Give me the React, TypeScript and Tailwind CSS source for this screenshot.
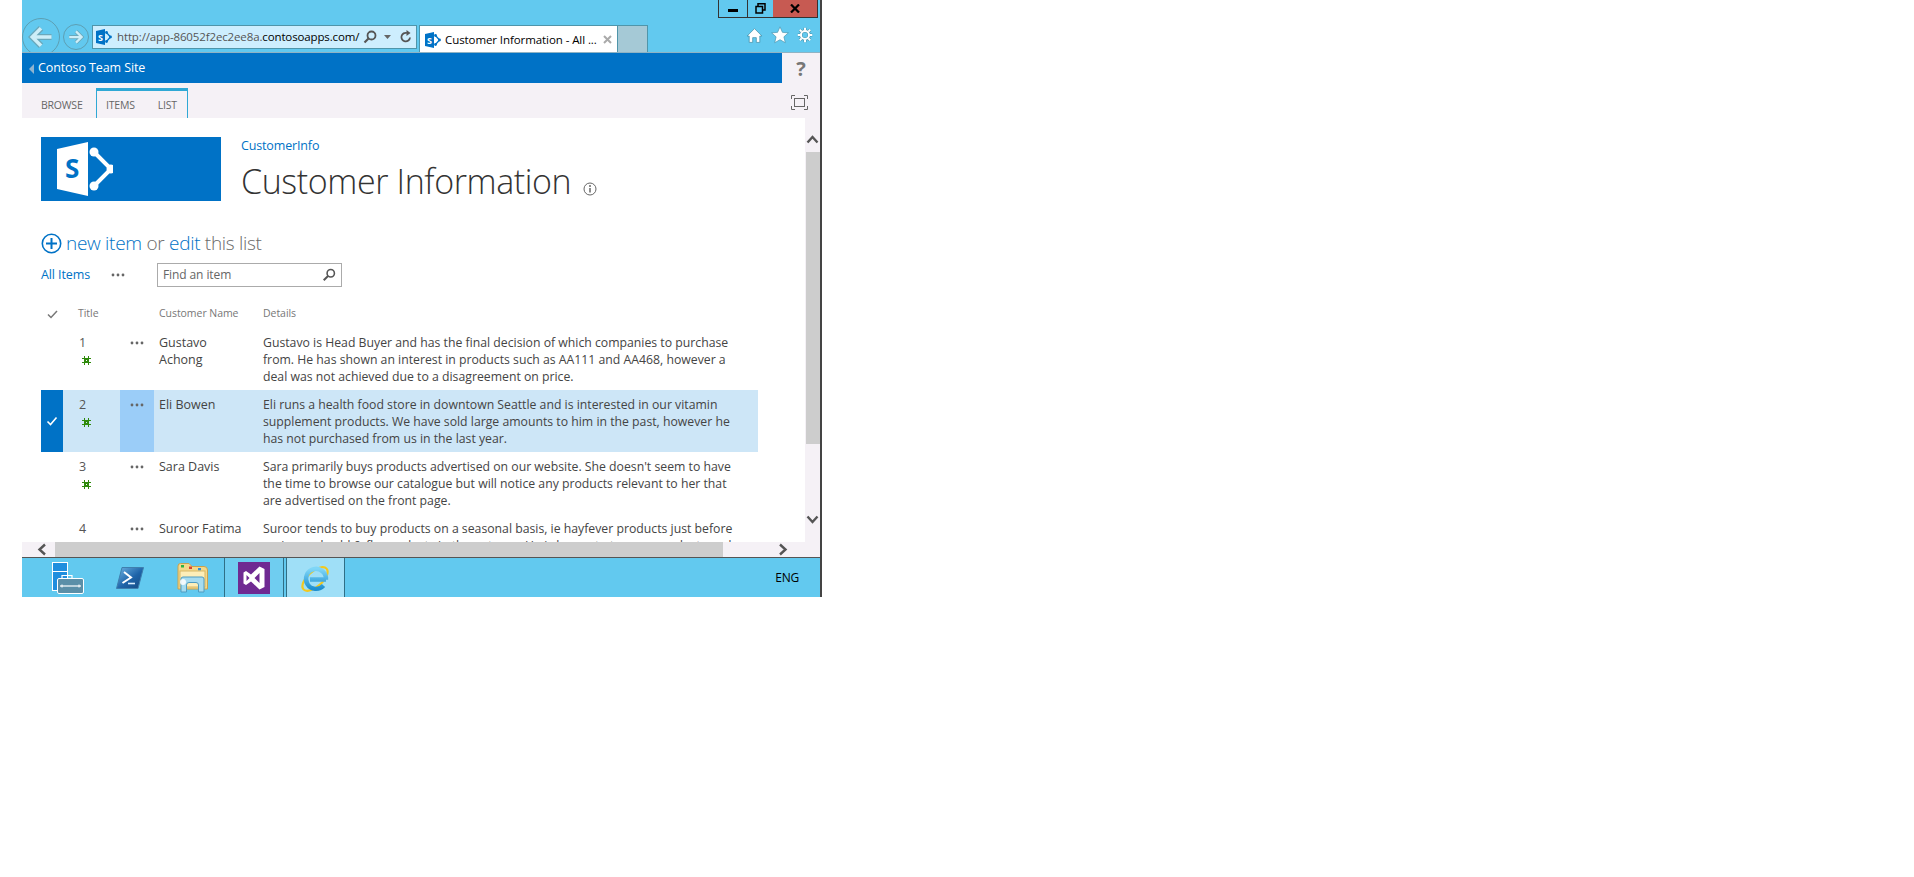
import React from "react";

function SpLogo({ size = 16 }: { size?: number }) {
  return (
    <svg width={size} height={size} viewBox="0 0 16 16" className="shrink-0">
      <path d="M0 2 L9 0 V16 L0 14 Z" fill="#0072c6" />
      <text x="2" y="11.5" fontSize="9" fontWeight="700" fill="#fff" fontFamily="'Open Sans', sans-serif">S</text>
      <path d="M10.5 3.5 L14.5 8 L10.5 12.5" fill="none" stroke="#0072c6" strokeWidth="1.3" />
      <circle cx="10.5" cy="3.5" r="1.4" fill="#0072c6" />
      <circle cx="14.5" cy="8" r="1.4" fill="#0072c6" />
      <circle cx="10.5" cy="12.5" r="1.4" fill="#0072c6" />
    </svg>
  );
}

function Dots({ color = "#666" }: { color?: string }) {
  return (
    <svg width="14" height="4" viewBox="0 0 14 4">
      <circle cx="2" cy="2" r="1.4" fill={color} />
      <circle cx="7" cy="2" r="1.4" fill={color} />
      <circle cx="12" cy="2" r="1.4" fill={color} />
    </svg>
  );
}

function NewIcon() {
  return (
    <svg width="9" height="9" viewBox="0 0 9 9" className="mt-[5px] ml-[3px]" shapeRendering="crispEdges">
      <g stroke="#2f8a0c" strokeWidth="1" fill="none">
        <path d="M2.5 0 V9 M6.5 0 V9 M0 2.5 H9 M0 6.5 H9" />
        <path d="M3.5 3.5 H5.5 V5.5 H3.5 Z" />
      </g>
    </svg>
  );
}

function Row({ n, name, lines, selected }: { n: number; name: string[]; lines: string[]; selected?: boolean }) {
  return (
    <div className={selected ? "flex h-[62px] shrink-0 w-[717px] bg-[#cde6f7]" : "flex h-[62px] shrink-0 w-[717px]"}>
      <div className={selected ? "w-[22px] bg-[#0072c6] flex items-center justify-center" : "w-[22px]"}>
        {selected && (
          <svg width="12" height="10" viewBox="0 0 12 10">
            <path d="M1.5 5.5 L4.5 8.5 L10.5 1.5" stroke="#fff" strokeWidth="1.6" fill="none" />
          </svg>
        )}
      </div>
      <div className="w-[57px] pl-[16px] pt-[6px] text-[12.5px] leading-[17px] text-[#555]">
        <div>{n}</div>
        <NewIcon />
      </div>
      <div className={selected ? "w-[34px] bg-[#9bcdf8] pt-[13px] pl-[10px]" : "w-[34px] pt-[13px] pl-[10px]"}>
        <div className="flex h-[4px]"><Dots /></div>
      </div>
      <div className="w-[109px] pl-[5px] pt-[6px] text-[12.5px] leading-[17px] text-[#444] whitespace-nowrap">
        {name.map((s) => (
          <div key={s}>{s}</div>
        ))}
      </div>
      <div className="pt-[6px] text-[12.25px] leading-[17px] text-[#444] whitespace-nowrap">
        {lines.map((s) => (
          <div key={s}>{s}</div>
        ))}
      </div>
    </div>
  );
}

function NavArrow({ size, flip }: { size: number; flip?: boolean }) {
  const d = flip ? "M3 12 H19 M12 4.5 L19.5 12 L12 19.5" : "M21 12 H5 M12 4.5 L4.5 12 L12 19.5";
  return (
    <svg width={size} height={size} viewBox="0 0 24 24">
      <path d={d} fill="none" stroke="#6aa8bb" strokeWidth="5.2" />
      <path d={d} fill="none" stroke="#cdeef8" strokeWidth="3" />
    </svg>
  );
}

function ServerManagerIcon() {
  return (
    <svg width="32" height="32" viewBox="0 0 32 32" className="shrink-0">
      <rect x="0.5" y="0.5" width="15" height="28" fill="#1f8ede" stroke="#fff" />
      <path d="M1 9.5 H15" stroke="#fff" />
      <path d="M10 17 V13.5 H20 V17" fill="none" stroke="#fff" strokeWidth="1.2" />
      <rect x="5.5" y="16.5" width="26" height="15" rx="1.5" fill="#5b8fa8" stroke="#fff" />
      <path d="M8 24 H29" stroke="#fff" strokeWidth="1.2" />
      <path d="M10 22.5 V25.5 M27 22.5 V25.5" stroke="#fff" />
    </svg>
  );
}

function PowerShellIcon() {
  return (
    <svg width="28" height="22" viewBox="0 0 28 22" className="shrink-0">
      <defs>
        <linearGradient id="ps" x1="0" y1="0" x2="1" y2="1">
          <stop offset="0" stopColor="#6fb6e6" />
          <stop offset="0.55" stopColor="#1e63a8" />
          <stop offset="1" stopColor="#17497f" />
        </linearGradient>
      </defs>
      <path d="M6 0.5 H27.5 L22 21.5 H0.5 Z" fill="url(#ps)" stroke="#3e7fae" />
      <path d="M8 5 L15 10.5 L6.5 16" fill="none" stroke="#fff" strokeWidth="2" />
      <path d="M12 16.5 H19" stroke="#dcefff" strokeWidth="1.6" />
    </svg>
  );
}

function ExplorerIcon() {
  return (
    <svg width="31" height="30" viewBox="0 0 31 30" className="shrink-0">
      <path d="M1 3 Q1 0.5 3.5 0.5 H12 L15 3.5 H27 Q30.5 3.5 30.5 7 V26 H1 Z" fill="#f3d98b" stroke="#c9a24e" />
      <rect x="4" y="2" width="3" height="2.5" fill="#2fb344" />
      <rect x="12" y="3.5" width="3" height="2.5" fill="#d9432f" />
      <rect x="21" y="5" width="3" height="2.5" fill="#2f8fd9" />
      <rect x="3" y="8" width="25" height="16" fill="#fdeeb8" stroke="#d8b866" />
      <path d="M4 16 Q4 14 6 14 H25 Q27 14 27 16 V29 H21.5 V22 Q21.5 19.5 19 19.5 H12 Q9.5 19.5 9.5 22 V29 H4 Z" fill="#a6dcf0" stroke="#4f9cc1" />
      <circle cx="6" cy="19" r="3" fill="#fff" opacity="0.85" />
    </svg>
  );
}

function VsIcon() {
  return (
    <svg width="32" height="32" viewBox="0 0 32 32" className="shrink-0">
      <rect x="0" y="0" width="32" height="32" fill="#6f2a92" />
      <path
        fillRule="evenodd"
        fill="#fff"
        d="M21.5 4.5 L26.5 7 V25 L21.5 27.5 L13 19.5 L8 23 L5.5 21.5 V10.5 L8 9 L13 12.5 Z M21.5 11 L16.5 16 L21.5 21 Z M8.5 13 V19 L11.5 16 Z"
      />
    </svg>
  );
}

function IeIcon() {
  return (
    <svg width="32" height="32" viewBox="0 0 32 32" className="shrink-0">
      <defs>
        <linearGradient id="ie" x1="0" y1="0" x2="0" y2="1">
          <stop offset="0" stopColor="#7fd6f7" />
          <stop offset="1" stopColor="#1e8fd0" />
        </linearGradient>
      </defs>
      <ellipse cx="15" cy="17" rx="15.5" ry="7.5" transform="rotate(-42 15 17)" fill="none" stroke="#f2c81e" strokeWidth="2.2" />
      <path d="M26 17.5 H10 M26 17.5 A10 10 0 1 0 23.5 23.5" fill="none" stroke="url(#ie)" strokeWidth="4.4" />
    </svg>
  );
}

export default function App() {
  return (
    <div className="w-[1914px] h-[877px] bg-white overflow-hidden" style={{ fontFamily: "'Open Sans', 'Noto Sans', sans-serif" }}>
      <div className="ml-[22px] w-[800px] h-[597px] flex flex-col border-r-2 border-[#444]">
        {/* Browser chrome */}
        <div className="h-[53px] shrink-0 bg-[#62c9ef] flex flex-col border-b border-[#8fb3c4]">
          <div className="h-[18px] shrink-0 flex justify-end items-start">
            <div className="flex h-[18px] mr-[2px] border-l border-b border-r border-[#333]">
              <div className="w-[29px] flex items-center justify-center border-r border-[#333]">
                <div className="w-[10px] h-[3px] bg-black mt-[3px]" />
              </div>
              <div className="w-[25px] flex items-center justify-center">
                <svg width="11" height="11" viewBox="0 0 11 11">
                  <path d="M3 3 V0.8 H10 V7 H8 M1 3.5 H7.5 V10 H1 Z" fill="none" stroke="#000" strokeWidth="1.5" />
                </svg>
              </div>
              <div className="w-[44px] bg-[#c75a52] flex items-center justify-center">
                <svg width="10" height="9" viewBox="0 0 10 9">
                  <path d="M1 0.5 L9 8.5 M9 0.5 L1 8.5" stroke="#000" strokeWidth="2.2" />
                </svg>
              </div>
            </div>
          </div>
          <div className="flex-1 flex items-start overflow-hidden">
            <div className="w-[38px] h-[38px] shrink-0 rounded-full border border-[#5d9fb3] flex items-center justify-center">
              <NavArrow size={28} />
            </div>
            <div className="w-[26px] h-[26px] ml-[3px] mt-[6px] shrink-0 rounded-full border border-[#5d9fb3] flex items-center justify-center">
              <NavArrow size={18} flip />
            </div>
            <div className="ml-[3px] mt-[7px] w-[325px] h-[24px] shrink-0 bg-[#cdeefe] border border-[#4f95aa] flex items-center pl-[3px] pr-[3px]">
              <SpLogo size={16} />
              <span className="ml-[5px] text-[11.5px] tracking-[-0.13px] text-[#555] whitespace-nowrap w-[244px]">
                http://app-86052f2ec2ee8a.<span className="text-black">contosoapps.com/</span>
              </span>
              <svg width="16" height="16" viewBox="0 0 16 16" className="ml-[3px] shrink-0">
                <circle cx="9.5" cy="6.5" r="4" fill="none" stroke="#555" strokeWidth="1.8" />
                <path d="M6.5 9.5 L2.5 13.5" stroke="#555" strokeWidth="2.2" />
              </svg>
              <svg width="10" height="6" viewBox="0 0 10 6" className="ml-[5px] shrink-0">
                <path d="M1 1 H8 L4.5 5 Z" fill="#666" />
              </svg>
              <svg width="14" height="14" viewBox="0 0 14 14" className="ml-[6px] shrink-0">
                <path d="M11 7.5 A4.3 4.3 0 1 1 8 3" fill="none" stroke="#555" strokeWidth="1.8" />
                <path d="M7.5 0 L11.5 3 L7.5 6 Z" fill="#555" />
              </svg>
            </div>
            <div className="ml-[2px] mt-[7px] w-[199px] h-[28px] shrink-0 bg-white border-l border-t border-r border-[#4f95aa] flex items-center pl-[5px]">
              <SpLogo size={16} />
              <span className="ml-[4px] text-[11.5px] tracking-[-0.08px] text-black whitespace-nowrap w-[158px]">Customer Information - All ...</span>
              <svg width="9" height="9" viewBox="0 0 9 9" className="shrink-0">
                <path d="M1 1 L8 8 M8 1 L1 8" stroke="#aaa" strokeWidth="2" />
              </svg>
            </div>
            <div className="mt-[7px] w-[30px] h-[28px] shrink-0 bg-[#a5c9d6] border-t border-r border-[#4f95aa]" />
            <div className="flex-1 flex items-center justify-end pr-[7px] pt-[8px] gap-[8px]">
              <svg width="17" height="17" viewBox="0 0 16 16">
                <path d="M8 1.5 L15 8.5 H13 V14.5 H9.7 V10 H6.3 V14.5 H3 V8.5 H1 Z" fill="#fff" stroke="#3f8fa8" strokeWidth="0.7" />
              </svg>
              <svg width="18" height="18" viewBox="0 0 17 17">
                <path d="M8.5 0.8 L10.8 6 L16.4 6.5 L12.2 10.2 L13.5 15.8 L8.5 12.9 L3.5 15.8 L4.8 10.2 L0.6 6.5 L6.2 6 Z" fill="#fff" stroke="#3f8fa8" strokeWidth="0.6" />
              </svg>
              <svg width="16" height="16" viewBox="0 0 17 17">
                <g fill="none" stroke="#3f8fa8" strokeWidth="3.2">
                  <circle cx="8.5" cy="8.5" r="4.3" />
                  <path d="M8.5 0.8 V3.4 M8.5 13.6 V16.2 M0.8 8.5 H3.4 M13.6 8.5 H16.2 M3 3 L4.9 4.9 M12.1 12.1 L14 14 M14 3 L12.1 4.9 M4.9 12.1 L3 14" />
                </g>
                <g fill="none" stroke="#fff" strokeWidth="2.2">
                  <circle cx="8.5" cy="8.5" r="4.3" />
                  <path d="M8.5 0.8 V3.4 M8.5 13.6 V16.2 M0.8 8.5 H3.4 M13.6 8.5 H16.2 M3 3 L4.9 4.9 M12.1 12.1 L14 14 M14 3 L12.1 4.9 M4.9 12.1 L3 14" />
                </g>
              </svg>
            </div>
          </div>
        </div>

        {/* Suite bar */}
        <div className="h-[30px] shrink-0 flex bg-[#f5f1f6]">
          <div className="w-[760px] bg-[#0072c6] flex items-center pl-[7px] pt-[1px]">
            <svg width="5" height="10" viewBox="0 0 5 10">
              <path d="M5 0 V10 L0 5 Z" fill="#8fb4cf" />
            </svg>
            <span className="ml-[4px] text-[12.5px] tracking-[-0.1px] text-white">Contoso Team Site</span>
          </div>
          <div className="flex-1 flex items-center justify-center text-[20px] font-bold text-[#777] pt-[1px]">?</div>
        </div>

        {/* Ribbon */}
        <div className="h-[35px] shrink-0 bg-[#f5f1f6] flex items-end pl-[19px]">
          <div className="w-[55px] h-[30px] flex items-center text-[10.5px] tracking-[-0.2px] text-[#666] pt-[6px]">BROWSE</div>
          <div className="w-[92px] h-[30px] flex items-center border-t-[3px] border-x border-[#2fa8d5] pl-[9px] gap-[23px] text-[10.5px] tracking-[-0.2px] text-[#666] pt-[3px]">
            <span>ITEMS</span>
            <span>LIST</span>
          </div>
          <div className="flex-1 self-center flex justify-end pr-[12px] pt-[4px]">
            <svg width="17" height="15" viewBox="0 0 17 15">
              <path d="M0.5 4 V0.5 H4 M13 0.5 H16.5 V4 M16.5 11 V14.5 H13 M4 14.5 H0.5 V11" fill="none" stroke="#666" />
              <rect x="3.5" y="3.5" width="10" height="8" fill="none" stroke="#666" />
            </svg>
          </div>
        </div>

        {/* Page */}
        <div className="h-[424px] shrink-0 flex">
          <div className="w-[783px] h-[424px] overflow-hidden flex flex-col bg-white">
            <div className="flex pt-[19px] pl-[19px] shrink-0">
              <div className="w-[180px] h-[64px] bg-[#0072c6] flex items-center pl-[16px]">
                <svg width="56" height="56" viewBox="0 0 56 56">
                  <path d="M0 8 L31 1 V55 L0 48 Z" fill="#fff" />
                  <text x="8" y="37" fontSize="26" fontWeight="700" fill="#0072c6" fontFamily="'Open Sans', sans-serif">S</text>
                  <path d="M37 11 L54 28 L37 45" fill="none" stroke="#fff" strokeWidth="4" />
                  <circle cx="37" cy="11" r="4.5" fill="#fff" />
                  <circle cx="54" cy="28" r="4.5" fill="#fff" />
                  <circle cx="37" cy="45" r="4.5" fill="#fff" />
                </svg>
              </div>
              <div className="ml-[20px]">
                <div className="text-[12.5px] leading-[17px] tracking-[-0.15px] text-[#0072c6]">CustomerInfo</div>
                <div className="flex items-end mt-[5px]">
                  <span className="text-[34px] leading-[44px] font-light text-[#333] tracking-[-0.4px] whitespace-nowrap">Customer Information</span>
                  <svg width="14" height="14" viewBox="0 0 14 14" className="ml-[12px] mb-[7px]">
                    <circle cx="7" cy="7" r="6" fill="none" stroke="#666" />
                    <path d="M7 6 V10.5" stroke="#666" strokeWidth="1.5" />
                    <circle cx="7" cy="4" r="1" fill="#666" />
                  </svg>
                </div>
              </div>
            </div>

            <div className="flex items-center mt-[29px] pl-[19px] h-[22px] shrink-0">
              <svg width="21" height="21" viewBox="0 0 21 21">
                <circle cx="10.5" cy="10.5" r="9.2" fill="none" stroke="#0072c6" strokeWidth="1.6" />
                <path d="M10.5 5 V16 M5 10.5 H16" stroke="#0072c6" strokeWidth="2" />
              </svg>
              <span className="ml-[4px] text-[19px] tracking-[-0.3px] font-light text-[#6a6a6a] whitespace-nowrap">
                <span className="text-[#0072c6]">new item</span> or <span className="text-[#0072c6]">edit</span> this list
              </span>
            </div>

            <div className="flex items-center mt-[9px] pl-[19px] h-[24px] shrink-0">
              <span className="w-[70px] text-[12.5px] tracking-[-0.1px] text-[#0072c6]">All Items</span>
              <div className="w-[46px] flex h-[4px]"><Dots /></div>
              <div className="w-[185px] h-[24px] border border-[#ababab] flex items-center justify-between pl-[5px] pr-[5px]">
                <span className="text-[12px] tracking-[-0.1px] text-[#666]">Find an item</span>
                <svg width="14" height="14" viewBox="0 0 16 16">
                  <circle cx="10" cy="6" r="4.2" fill="none" stroke="#555" strokeWidth="1.8" />
                  <path d="M7 9 L2 14" stroke="#555" strokeWidth="2.4" />
                </svg>
              </div>
            </div>

            <div className="flex items-center h-[30px] mt-[12px] pl-[19px] shrink-0 text-[10.5px] tracking-[-0.05px] text-[#777]">
              <div className="w-[22px] flex justify-center">
                <svg width="11" height="9" viewBox="0 0 11 9">
                  <path d="M1 4.5 L4 7.5 L10 1" stroke="#777" strokeWidth="1.5" fill="none" />
                </svg>
              </div>
              <div className="w-[91px] pl-[15px]">Title</div>
              <div className="w-[109px] pl-[5px]">Customer Name</div>
              <div>Details</div>
            </div>

            <div className="flex flex-col pl-[19px] shrink-0 -mt-[1px]">
              <Row
                n={1}
                name={["Gustavo", "Achong"]}
                lines={[
                  "Gustavo is Head Buyer and has the final decision of which companies to purchase",
                  "from. He has shown an interest in products such as AA111 and AA468, however a",
                  "deal was not achieved due to a disagreement on price.",
                ]}
              />
              <Row
                n={2}
                selected
                name={["Eli Bowen"]}
                lines={[
                  "Eli runs a health food store in downtown Seattle and is interested in our vitamin",
                  "supplement products. We have sold large amounts to him in the past, however he",
                  "has not purchased from us in the last year.",
                ]}
              />
              <Row
                n={3}
                name={["Sara Davis"]}
                lines={[
                  "Sara primarily buys products advertised on our website. She doesn't seem to have",
                  "the time to browse our catalogue but will notice any products relevant to her that",
                  "are advertised on the front page.",
                ]}
              />
              <Row
                n={4}
                name={["Suroor Fatima"]}
                lines={[
                  "Suroor tends to buy products on a seasonal basis, ie hayfever products just before",
                  "spring and cold & flu products in the autumn. He is happy to try new products and",
                  "often asks for samples.",
                ]}
              />
            </div>
          </div>
          <div className="w-[15px] bg-[#f5f1f6] flex flex-col">
            <div className="h-[34px] flex justify-center pt-[17px]">
              <svg width="13" height="9" viewBox="0 0 13 9">
                <path d="M1.5 7.5 L6.5 2 L11.5 7.5" fill="none" stroke="#555" strokeWidth="2.4" />
              </svg>
            </div>
            <div className="h-[292px] ml-[1px] bg-[#cdcdcd]" />
            <div className="flex-1 flex items-end justify-center pb-[18px]">
              <svg width="13" height="9" viewBox="0 0 13 9">
                <path d="M1.5 1.5 L6.5 7 L11.5 1.5" fill="none" stroke="#555" strokeWidth="2.4" />
              </svg>
            </div>
          </div>
        </div>

        {/* Horizontal scrollbar */}
        <div className="h-[15px] shrink-0 flex items-stretch bg-[#f5f1f6]">
          <div className="w-[33px] pl-[7px] flex items-center justify-center">
            <svg width="10" height="13" viewBox="0 0 10 13">
              <path d="M8 1.5 L2.5 6.5 L8 11.5" fill="none" stroke="#555" strokeWidth="2.4" />
            </svg>
          </div>
          <div className="w-[668px] bg-[#cdcdcd]" />
          <div className="w-[65px] flex items-center justify-end">
            <svg width="10" height="13" viewBox="0 0 10 13">
              <path d="M2 1.5 L7.5 6.5 L2 11.5" fill="none" stroke="#555" strokeWidth="2.4" />
            </svg>
          </div>
        </div>

        {/* Taskbar */}
        <div className="h-[40px] shrink-0 bg-[#62c9ef] border-t border-[#555] flex items-center pl-[30px]">
          <ServerManagerIcon />
          <div className="ml-[32px]"><PowerShellIcon /></div>
          <div className="ml-[33px]"><ExplorerIcon /></div>
          <div className="ml-[16px] w-[60px] h-full bg-[#6fcdf0] border-x border-[#2f6f86] flex items-center justify-center">
            <VsIcon />
          </div>
          <div className="ml-[2px] w-[59px] h-full bg-[#9fdff7] border-x border-[#2f6f86] flex items-center justify-center">
            <IeIcon />
          </div>
          <div className="flex-1 flex justify-end pr-[21px] text-[12px] tracking-[-0.2px] text-black">ENG</div>
        </div>
      </div>
    </div>
  );
}
